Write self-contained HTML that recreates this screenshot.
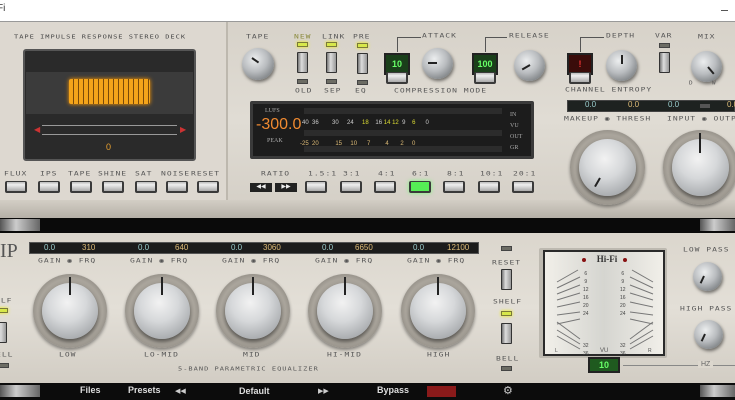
<!DOCTYPE html>
<html><head><meta charset="utf-8"><style>
*{margin:0;padding:0;box-sizing:border-box}
body{width:735px;height:400px;overflow:hidden;background:#fff;font-family:"Liberation Sans",sans-serif;position:relative}
.a{position:absolute}
.lbl{position:absolute;font-size:8px;color:#555;letter-spacing:1px;white-space:nowrap;font-family:"DejaVu Sans Mono","Liberation Mono",monospace;transform:scaleY(.8)}
.k{position:absolute;border-radius:50%;background:radial-gradient(circle at 40% 35%,#eceeef 0,#b9bcbf 45%,#7e8285 80%,#4a4a4a 100%);box-shadow:1px 2px 3px rgba(0,0,0,.5)}
.ring{position:absolute;border-radius:50%;background:radial-gradient(circle,#7f7b75 0,#aaa59c 62%,#6e6a64 92%,#3e3c3a 100%);box-shadow:0 2px 3px rgba(0,0,0,.4)}
.bk{position:absolute;border-radius:50%;background:radial-gradient(circle at 45% 35%,#f2f2f2 0,#d6d8da 40%,#a6a9ac 80%,#7c7f82 100%);box-shadow:0 3px 4px rgba(0,0,0,.45)}
.ptr{position:absolute;background:#222;width:2px;transform-origin:50% 0}
.sw{position:absolute;width:11px;height:21px;background:linear-gradient(90deg,#777,#ddd 40%,#999);border:1px solid #333;border-radius:1px}
.led{position:absolute;width:11px;height:5px;background:#d7e84a;border:1px solid #7a7a3a;box-shadow:0 0 3px #ee0}
.ledo{position:absolute;width:11px;height:5px;background:#6c6c64;border:1px solid #444}
.btn{position:absolute;width:22px;height:12px;background:linear-gradient(#bbb,#eee 30%,#aaa);border:2px solid #3a3a3a;border-top-width:1px;border-radius:2px}
.gd{position:absolute;background:#1a3f1a;border:2px solid #222;color:#6f6;font-size:9px;font-weight:bold;text-align:center;line-height:18px}
.v{position:absolute;font-size:8px;color:#9cc}
.o{position:absolute;font-size:8px;color:#db7}
</style></head><body>
<div class="a" style="left:0;top:0;width:735px;height:20px;background:#fff"></div>
<div class="a" style="left:-3px;top:3px;font-size:10px;color:#333">Fi</div>
<div class="a" style="left:721px;top:10px;width:7px;height:1px;background:#555"></div>

<div class="a" style="left:0;top:21px;width:735px;height:197px;background:linear-gradient(#d7d2c9,#e0dcd4 50%,#d3cec5);border-top:1px solid #999"></div>
<div class="a" style="left:0;top:22px;width:228px;height:178px;background:#ddd8d0;border-right:2px solid #bdb8ae"></div>
<div class="a" style="left:0;top:200px;width:735px;height:18px;background:linear-gradient(#d3cec5,#b5b0a7)"></div>
<div class="lbl" style="left:14px;top:33px;font-size:7px;color:#444">TAPE IMPULSE RESPONSE STEREO DECK</div>
<div class="a" style="left:23px;top:49px;width:173px;height:112px;background:#2a2a2a;border:2px solid #555;border-radius:3px"></div>
<div class="a" style="left:26px;top:72px;width:167px;height:42px;background:#3b3b3b"></div>
<div class="a" style="left:69px;top:79px;width:81px;height:25px;background:repeating-linear-gradient(90deg,#f4a41a 0,#f4a41a 4px,#7a4a08 4px,#7a4a08 5px);border-radius:2px;box-shadow:0 0 4px #f90"></div>
<div class="a" style="left:42px;top:125px;width:135px;height:1px;background:#999"></div>
<div class="a" style="left:42px;top:134px;width:135px;height:1px;background:#999"></div>
<div class="a" style="left:34px;top:125px;color:#c33;font-size:8px">◀</div>
<div class="a" style="left:180px;top:125px;color:#c33;font-size:8px">▶</div>
<div class="a" style="left:106px;top:142px;color:#e8a030;font-size:9px">0</div>
<div class="lbl" style="left:4px;top:169px">FLUX</div><div class="lbl" style="left:40px;top:169px">IPS</div><div class="lbl" style="left:68px;top:169px">TAPE</div><div class="lbl" style="left:98px;top:169px">SHINE</div><div class="lbl" style="left:135px;top:169px">SAT</div><div class="lbl" style="left:161px;top:169px">NOISE</div><div class="lbl" style="left:191px;top:169px">RESET</div>
<div class="btn" style="left:5px;top:181px"></div><div class="btn" style="left:38px;top:181px"></div><div class="btn" style="left:70px;top:181px"></div><div class="btn" style="left:102px;top:181px"></div><div class="btn" style="left:135px;top:181px"></div><div class="btn" style="left:166px;top:181px"></div><div class="btn" style="left:197px;top:181px"></div>

<div class="lbl" style="left:246px;top:32px">TAPE</div>
<div class="k" style="left:242px;top:48px;width:32px;height:32px"></div><div class="ptr" style="left:251px;top:58px;height:8px;transform:rotate(-55deg)"></div>
<div class="lbl" style="left:294px;top:32px;color:#8a8a3a">NEW</div><div class="lbl" style="left:322px;top:32px">LINK</div><div class="lbl" style="left:353px;top:32px">PRE</div>
<div class="led" style="left:297px;top:42px"></div><div class="led" style="left:326px;top:42px"></div><div class="led" style="left:357px;top:43px"></div>
<div class="sw" style="left:297px;top:52px"></div><div class="sw" style="left:326px;top:52px"></div><div class="sw" style="left:357px;top:53px"></div>
<div class="ledo" style="left:297px;top:79px"></div><div class="ledo" style="left:326px;top:79px"></div><div class="ledo" style="left:357px;top:80px"></div>
<div class="lbl" style="left:295px;top:86px">OLD</div><div class="lbl" style="left:324px;top:86px">SEP</div><div class="lbl" style="left:355px;top:86px">EQ</div>
<div class="lbl" style="left:422px;top:31px">ATTACK</div><div class="lbl" style="left:509px;top:31px">RELEASE</div><div class="lbl" style="left:606px;top:31px">DEPTH</div><div class="lbl" style="left:655px;top:31px">VAR</div><div class="lbl" style="left:698px;top:32px">MIX</div>
<div class="a" style="left:397px;top:37px;width:24px;height:1px;background:#555"></div><div class="a" style="left:397px;top:37px;width:1px;height:15px;background:#555"></div>
<div class="a" style="left:485px;top:37px;width:22px;height:1px;background:#555"></div><div class="a" style="left:485px;top:37px;width:1px;height:15px;background:#555"></div>
<div class="a" style="left:580px;top:37px;width:24px;height:1px;background:#555"></div><div class="a" style="left:580px;top:37px;width:1px;height:15px;background:#555"></div>
<div class="gd" style="left:384px;top:53px;width:26px;height:22px">10</div><div class="btn" style="left:386px;top:72px"></div>
<div class="gd" style="left:472px;top:53px;width:26px;height:22px">100</div><div class="btn" style="left:474px;top:72px"></div>
<div class="gd" style="left:567px;top:53px;width:26px;height:22px;background:#3a0c0a;color:#e33">!</div><div class="btn" style="left:569px;top:72px"></div>
<div class="k" style="left:422px;top:48px;width:31px;height:31px"></div><div class="ptr" style="left:436px;top:63px;height:9px;transform:rotate(90deg)"></div>
<div class="k" style="left:514px;top:50px;width:31px;height:31px"></div><div class="ptr" style="left:529px;top:65px;height:9px;transform:rotate(60deg)"></div>
<div class="k" style="left:606px;top:50px;width:31px;height:31px"></div><div class="ptr" style="left:621px;top:55px;height:9px"></div>
<div class="k" style="left:691px;top:51px;width:31px;height:31px"></div><div class="ptr" style="left:707px;top:67px;height:9px;transform:rotate(-40deg)"></div>
<div class="ledo" style="left:659px;top:43px"></div><div class="sw" style="left:659px;top:52px"></div>
<div class="lbl" style="left:394px;top:86px">COMPRESSION MODE</div><div class="lbl" style="left:565px;top:85px">CHANNEL ENTROPY</div>
<div class="lbl" style="left:689px;top:80px;font-size:6px">D&nbsp;&nbsp;&nbsp;&nbsp;W</div>
<div class="a" style="left:250px;top:101px;width:284px;height:58px;background:#1c1c1c;border:3px solid #3a3a3a;border-radius:2px"></div>
<div class="a" style="left:265px;top:108px;font-size:6px;color:#aaa;font-family:'Liberation Serif',serif">LUFS</div>
<div class="a" style="left:256px;top:116px;font-size:16px;color:#f08a30">-300.0</div>
<div class="a" style="left:267px;top:138px;font-size:6px;color:#aaa;font-family:'Liberation Serif',serif">PEAK</div>
<div class="a" style="left:304px;top:108px;width:198px;height:6px;background:#2c2c2c"></div>
<div class="a" style="left:304px;top:130px;width:198px;height:6px;background:#2c2c2c"></div>
<div class="a" style="left:304px;top:146px;width:198px;height:6px;background:#2c2c2c"></div>
<div class="a" style="left:302px;top:120px;font-size:6px;color:#ccc;letter-spacing:0;white-space:pre">40  36        30     24     <span style="color:#dd3">18</span>    16 <span style="color:#dd3">14 12</span>  9    <span style="color:#dd3">6</span>      0</div>
<div class="a" style="left:300px;top:141px;font-size:6px;color:#db7;white-space:pre">-25  20          15     10      7         4       2     0</div>
<div class="a" style="left:510px;top:110px;font-size:6px;color:#aaa;line-height:11px;font-family:'Liberation Serif',serif">IN<br>VU<br>OUT<br>GR</div>
<div class="lbl" style="left:261px;top:169px">RATIO</div>
<div class="a" style="left:250px;top:183px;width:22px;height:9px;background:#222;color:#eee;font-size:6px;text-align:center">◀◀</div>
<div class="a" style="left:275px;top:183px;width:22px;height:9px;background:#222;color:#eee;font-size:6px;text-align:center">▶▶</div>
<div class="lbl" style="left:308px;top:169px">1.5:1</div><div class="lbl" style="left:343px;top:169px">3:1</div><div class="lbl" style="left:378px;top:169px">4:1</div><div class="lbl" style="left:412px;top:169px">6:1</div><div class="lbl" style="left:447px;top:169px">8:1</div><div class="lbl" style="left:480px;top:169px">10:1</div><div class="lbl" style="left:513px;top:169px">20:1</div>
<div class="btn" style="left:305px;top:181px"></div><div class="btn" style="left:340px;top:181px"></div><div class="btn" style="left:374px;top:181px"></div>
<div class="btn" style="left:409px;top:181px;background:#5e5;box-shadow:0 0 4px #7f7"></div>
<div class="btn" style="left:443px;top:181px"></div><div class="btn" style="left:478px;top:181px"></div><div class="btn" style="left:512px;top:181px"></div>
<div class="a" style="left:567px;top:100px;width:168px;height:12px;background:#1e2220;border:1px solid #444"></div>
<div class="v" style="left:585px;top:100px">0.0</div><div class="o" style="left:628px;top:100px">0.0</div><div class="v" style="left:668px;top:100px">0.0</div><div class="a" style="left:700px;top:104px;width:10px;height:4px;background:#555"></div><div class="o" style="left:727px;top:100px">0.0</div>
<div class="lbl" style="left:564px;top:114px">MAKEUP ◉ THRESH</div><div class="lbl" style="left:667px;top:114px">INPUT ◉ OUTPUT</div>
<div class="ring" style="left:570px;top:130px;width:75px;height:75px"></div><div class="bk" style="left:579px;top:139px;width:57px;height:57px"></div><div class="ptr" style="left:599px;top:178px;height:10px;transform:rotate(30deg)"></div>
<div class="ring" style="left:663px;top:130px;width:75px;height:75px"></div><div class="bk" style="left:672px;top:139px;width:57px;height:57px"></div><div class="ptr" style="left:699px;top:133px;height:20px"></div>

<div class="a" style="left:0;top:218px;width:735px;height:15px;background:#0a0a0a"></div>
<div class="a" style="left:0;top:219px;width:40px;height:12px;background:linear-gradient(90deg,#555,#ccc 40%,#666)"></div>
<div class="a" style="left:700px;top:219px;width:35px;height:12px;background:linear-gradient(90deg,#555,#ccc 40%,#666)"></div>

<div class="a" style="left:0;top:233px;width:735px;height:150px;background:linear-gradient(#dbd6cd,#e3dfd7 50%,#d2cdc4)"></div>
<div class="a" style="left:0;top:240px;font-size:20px;color:#555;font-family:'Liberation Serif',serif">IP</div>
<div class="a" style="left:29px;top:242px;width:450px;height:12px;background:#1c1c1c;border:1px solid #555"></div>
<div class="v" style="left:44px;top:243px">0.0</div><div class="o" style="left:82px;top:243px">310</div>
<div class="v" style="left:138px;top:243px">0.0</div><div class="o" style="left:175px;top:243px">640</div>
<div class="v" style="left:231px;top:243px">0.0</div><div class="o" style="left:263px;top:243px">3060</div>
<div class="v" style="left:322px;top:243px">0.0</div><div class="o" style="left:355px;top:243px">6650</div>
<div class="v" style="left:413px;top:243px">0.0</div><div class="o" style="left:447px;top:243px">12100</div>
<div class="lbl" style="left:38px;top:256px">GAIN ◉ FRQ</div><div class="lbl" style="left:130px;top:256px">GAIN ◉ FRQ</div><div class="lbl" style="left:222px;top:256px">GAIN ◉ FRQ</div><div class="lbl" style="left:315px;top:256px">GAIN ◉ FRQ</div><div class="lbl" style="left:407px;top:256px">GAIN ◉ FRQ</div>
<div class="ring" style="left:33px;top:274px;width:74px;height:74px"></div><div class="bk" style="left:42px;top:283px;width:56px;height:56px"></div><div class="ptr" style="left:69px;top:277px;height:18px"></div>
<div class="ring" style="left:125px;top:274px;width:74px;height:74px"></div><div class="bk" style="left:134px;top:283px;width:56px;height:56px"></div><div class="ptr" style="left:161px;top:277px;height:18px"></div>
<div class="ring" style="left:216px;top:274px;width:74px;height:74px"></div><div class="bk" style="left:225px;top:283px;width:56px;height:56px"></div><div class="ptr" style="left:252px;top:277px;height:18px"></div>
<div class="ring" style="left:308px;top:274px;width:74px;height:74px"></div><div class="bk" style="left:317px;top:283px;width:56px;height:56px"></div><div class="ptr" style="left:344px;top:277px;height:18px"></div>
<div class="ring" style="left:401px;top:274px;width:74px;height:74px"></div><div class="bk" style="left:410px;top:283px;width:56px;height:56px"></div><div class="ptr" style="left:437px;top:277px;height:18px"></div>
<div class="lbl" style="left:59px;top:350px">LOW</div><div class="lbl" style="left:144px;top:350px">LO-MID</div><div class="lbl" style="left:243px;top:350px">MID</div><div class="lbl" style="left:327px;top:350px">HI-MID</div><div class="lbl" style="left:427px;top:350px">HIGH</div>
<div class="lbl" style="left:178px;top:365px;font-size:7px">5-BAND PARAMETRIC EQUALIZER</div>
<div class="lbl" style="left:-5px;top:296px">ELF</div><div class="led" style="left:-3px;top:308px"></div><div class="sw" style="left:-4px;top:322px"></div><div class="lbl" style="left:-4px;top:350px">ELL</div><div class="ledo" style="left:-2px;top:363px"></div>
<div class="ledo" style="left:501px;top:246px"></div>
<div class="lbl" style="left:492px;top:258px">RESET</div><div class="sw" style="left:501px;top:269px"></div>
<div class="lbl" style="left:493px;top:297px">SHELF</div><div class="led" style="left:501px;top:311px"></div>
<div class="sw" style="left:501px;top:323px"></div>
<div class="lbl" style="left:496px;top:354px">BELL</div><div class="ledo" style="left:501px;top:366px"></div>
<div class="a" style="left:539px;top:248px;width:128px;height:110px;background:#bdb9b0;border-radius:2px"></div>
<div class="a" style="left:543px;top:250px;width:122px;height:106px;background:linear-gradient(90deg,#f1efe9,#d5d5d0 50%,#f1efe9);border:2px solid #2a2a2a"></div>
<div class="a" style="left:582px;top:254px;width:50px;text-align:center;font-size:9px;font-weight:bold;color:#333;font-family:'Liberation Serif',serif">Hi-Fi</div>
<div class="a" style="left:582px;top:258px;width:4px;height:4px;border-radius:50%;background:#811"></div><div class="a" style="left:623px;top:258px;width:4px;height:4px;border-radius:50%;background:#811"></div>
<div class="a" style="left:583px;top:270px;font-size:5px;color:#444;line-height:8px;text-align:center">6<br>9<br>12<br>16<br>20<br>24<br><br><br><br>32<br>36</div>
<div class="a" style="left:620px;top:270px;font-size:5px;color:#444;line-height:8px;text-align:center">6<br>9<br>12<br>16<br>20<br>24<br><br><br><br>32<br>36</div>
<svg class="a" style="left:545px;top:252px" width="120" height="104"><g stroke="#777" stroke-width="1">
<line x1="12" y1="30" x2="33" y2="18"/><line x1="12" y1="36" x2="35" y2="25"/><line x1="12" y1="42" x2="35" y2="33"/><line x1="12" y1="48" x2="35" y2="41"/><line x1="12" y1="55" x2="35" y2="50"/><line x1="12" y1="63" x2="35" y2="60"/><line x1="12" y1="72" x2="35" y2="67"/>
<line x1="12" y1="78" x2="35" y2="92"/><line x1="12" y1="70" x2="35" y2="87"/><line x1="12" y1="84" x2="35" y2="97"/>
<line x1="108" y1="30" x2="87" y2="18"/><line x1="108" y1="36" x2="85" y2="25"/><line x1="108" y1="42" x2="85" y2="33"/><line x1="108" y1="48" x2="85" y2="41"/><line x1="108" y1="55" x2="85" y2="50"/><line x1="108" y1="63" x2="85" y2="60"/><line x1="108" y1="72" x2="85" y2="67"/>
<line x1="108" y1="78" x2="85" y2="92"/><line x1="108" y1="70" x2="85" y2="87"/><line x1="108" y1="84" x2="85" y2="97"/></g>
<text x="10" y="100" font-size="5" fill="#555">L</text><text x="55" y="100" font-size="6" fill="#555">VU</text><text x="103" y="100" font-size="5" fill="#555">R</text></svg>
<div class="gd" style="left:588px;top:357px;width:32px;height:16px;line-height:12px;background:#1f5a1f">10</div>
<div class="a" style="left:623px;top:365px;width:112px;height:1px;background:#888"></div>
<div class="a" style="left:698px;top:361px;padding:0 3px;font-size:7px;color:#666;background:#dcd7ce">HZ</div>
<div class="lbl" style="left:683px;top:245px">LOW PASS</div><div class="lbl" style="left:680px;top:304px">HIGH PASS</div>
<div class="k" style="left:693px;top:262px;width:29px;height:29px"></div><div class="ptr" style="left:703px;top:276px;height:8px;transform:rotate(25deg)"></div>
<div class="k" style="left:694px;top:320px;width:29px;height:29px"></div><div class="ptr" style="left:704px;top:334px;height:8px;transform:rotate(25deg)"></div>

<div class="a" style="left:0;top:383px;width:735px;height:17px;background:#0c0c0c"></div>
<div class="a" style="left:0;top:385px;width:40px;height:12px;background:linear-gradient(90deg,#555,#ccc 40%,#666)"></div>
<div class="a" style="left:700px;top:385px;width:35px;height:12px;background:linear-gradient(90deg,#555,#ccc 40%,#666)"></div>
<div class="a" style="left:80px;top:385px;font-size:9px;font-weight:bold;color:#ddd">Files</div>
<div class="a" style="left:128px;top:385px;font-size:9px;font-weight:bold;color:#ddd">Presets</div>
<div class="a" style="left:175px;top:387px;font-size:7px;color:#ccc">◀◀</div>
<div class="a" style="left:239px;top:386px;font-size:9px;font-weight:bold;color:#ddd">Default</div>
<div class="a" style="left:318px;top:387px;font-size:7px;color:#ccc">▶▶</div>
<div class="a" style="left:377px;top:385px;font-size:9px;font-weight:bold;color:#ddd">Bypass</div>
<div class="a" style="left:427px;top:386px;width:29px;height:11px;background:#8a1a1a"></div>
<div class="a" style="left:503px;top:384px;font-size:11px;color:#ccc">⚙</div>
</body></html>
